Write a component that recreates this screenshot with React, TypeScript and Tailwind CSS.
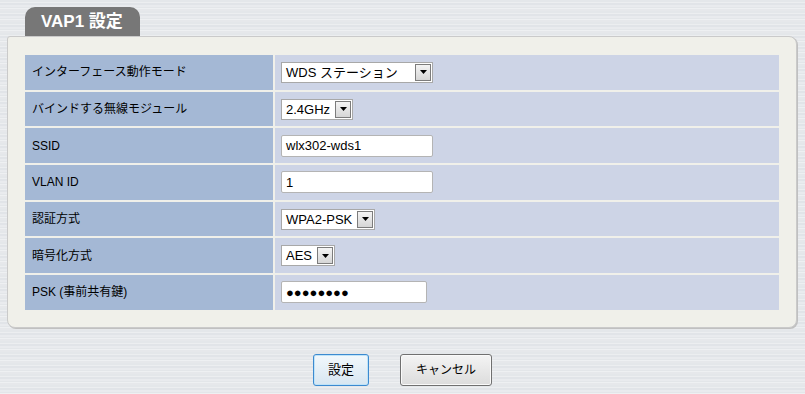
const rows: { label: string; kind: "select" | "text" | "password"; value: string; width: string }[] = [
  { label: "インターフェース動作モード", kind: "select", value: "WDS ステーション", width: "w-[152px]" },
  { label: "バインドする無線モジュール", kind: "select", value: "2.4GHz", width: "w-[72px]" },
  { label: "SSID", kind: "text", value: "wlx302-wds1", width: "w-[152px]" },
  { label: "VLAN ID", kind: "text", value: "1", width: "w-[152px]" },
  { label: "認証方式", kind: "select", value: "WPA2-PSK", width: "w-[94px]" },
  { label: "暗号化方式", kind: "select", value: "AES", width: "w-[54px]" },
  { label: "PSK (事前共有鍵)", kind: "password", value: "●●●●●●●●", width: "w-[146px]" },
]

const Dropdown = ({ value, width }: { value: string; width: string }) => (
  <div className={`flex h-[21px] items-center justify-between border border-[#a8a8a8] bg-white pl-[4px] pr-[1px] ${width}`}>
    <span className="whitespace-nowrap text-[13px] leading-none text-black">{value}</span>
    {/* arrow button */}
    <span className="flex h-[17px] w-[16px] items-center justify-center border border-[#7c7c7c] bg-gradient-to-b from-[#f4f4f4] to-[#d6d6d6]">
      <svg width="7" height="4" viewBox="0 0 7 4">
        <path d="M0 0h7L3.5 4z" fill="#000" />
      </svg>
    </span>
  </div>
)

const TextBox = ({ value, width, password }: { value: string; width: string; password?: boolean }) => (
  <div
    className={`flex h-[22px] items-center rounded-[2px] border border-[#b4b4b4] bg-white px-[4px] ${width} ${
      password ? "text-[13px] tracking-[0px]" : "text-[13px]"
    } leading-none text-black`}
  >
    {value}
  </div>
)

export default function App() {
  return (
    <div
      className="h-[394px] w-[805px] overflow-hidden bg-[repeating-linear-gradient(180deg,#e4e7ea_0px,#e4e7ea_2px,#eceef0_2px,#eceef0_3px,#e1e4e8_3px,#e1e4e8_5px,#e9ebee_5px,#e9ebee_7px,#e3e6e9_7px,#e3e6e9_8px,#eef0f2_8px,#eef0f2_9px,#e6e8eb_9px,#e6e8eb_11px)]"
      style={{ fontFamily: '"Liberation Sans", "Noto Sans CJK JP", sans-serif' }}
    >
      {/* section tab */}
      <div className="pl-[25px] pt-[7px]">
        <div className="flex h-[29px] w-[115px] items-center rounded-t-[10px] bg-[#777777] pl-[16px] text-[17px] font-bold text-white">
          VAP1 設定
        </div>
      </div>

      {/* panel */}
      <div className="ml-[7px] mr-[8px] rounded-[8px] rounded-tl-[3px] border border-[#cacaca] bg-[#f0f0ea] px-[17px] pb-[17px] pt-[18px] shadow-[1px_1px_0_#c0c0c0]">
        <div className="grid grid-cols-[248px_1fr] gap-[2px] bg-[#f0f0ea]">
          {rows.map((r) => (
            <div key={r.label} className="contents">
              <div className="flex h-[34.7px] items-center bg-[#a4b8d5] pl-[7px] text-[12px] text-black">{r.label}</div>
              <div className="flex h-[34.7px] items-center bg-[#cdd4e6] pl-[6px]">
                {r.kind === "select" && <Dropdown value={r.value} width={r.width} />}
                {r.kind === "text" && <TextBox value={r.value} width={r.width} />}
                {r.kind === "password" && <TextBox value={r.value} width={r.width} password />}
              </div>
            </div>
          ))}
        </div>
      </div>

      {/* actions */}
      <div className="mt-[26px] flex justify-center gap-[31px]">
        <button className="h-[32px] w-[56px] rounded-[3px] border border-[#3c8ad0] bg-gradient-to-b from-[#f2f8fc] to-[#d7e6f1] text-[13px] text-black shadow-[inset_0_0_0_1px_#bfe3f8]">
          設定
        </button>
        <button className="h-[32px] w-[92px] rounded-[3px] border border-[#707070] bg-gradient-to-b from-[#f4f4f4] to-[#dcdcdc] text-[12px] text-black shadow-[inset_0_0_0_1px_#fafafa]">
          キャンセル
        </button>
      </div>
    </div>
  )
}
